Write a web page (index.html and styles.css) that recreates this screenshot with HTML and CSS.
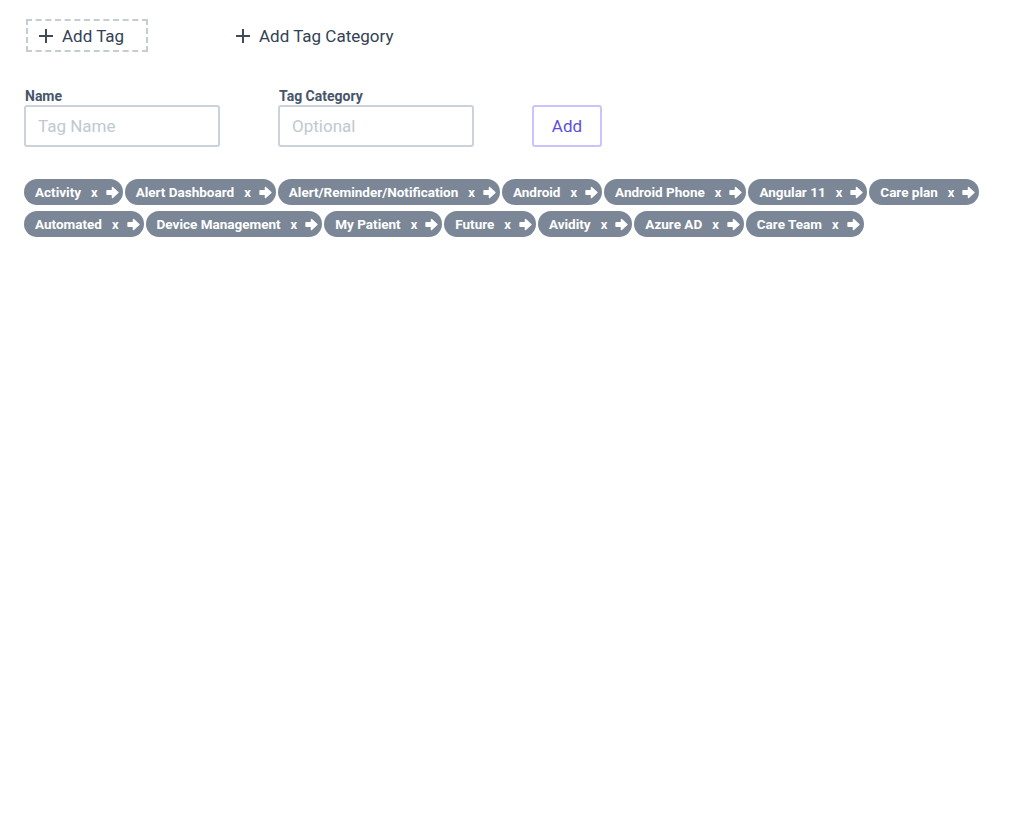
FILE: index.html
```html
<!DOCTYPE html>
<html>
<head>
<meta charset="utf-8">
<link rel="stylesheet" href="styles.css">
</head>
<body>
<div class="page">
  <div class="actions">
    <button class="add-tag">
      <svg class="plus" viewBox="0 0 16 16" width="16" height="16"><path d="M8 1v14M1 8h14" stroke="currentColor" stroke-width="2" fill="none"/></svg>
      <span>Add Tag</span>
    </button>
    <button class="add-cat">
      <svg class="plus" viewBox="0 0 16 16" width="16" height="16"><path d="M8 1v14M1 8h14" stroke="currentColor" stroke-width="2" fill="none"/></svg>
      <span>Add Tag Category</span>
    </button>
  </div>
  <div class="form">
    <div class="field">
      <label class="label">Name</label>
      <input class="input" placeholder="Tag Name">
    </div>
    <div class="field">
      <label class="label">Tag Category</label>
      <input class="input" placeholder="Optional">
    </div>
    <button class="add-btn">Add</button>
  </div>
  <div class="tags">
    <span class="tag">Activity<span class="x">x</span><svg class="arrow" viewBox="0 0 12 12"><path d="M1 4.5h5V1.5L11 6 6 10.5V7.5H1z" fill="currentColor" stroke="currentColor" stroke-width="1.4" stroke-linejoin="round"/></svg></span>
    <span class="tag">Alert Dashboard<span class="x">x</span><svg class="arrow" viewBox="0 0 12 12"><path d="M1 4.5h5V1.5L11 6 6 10.5V7.5H1z" fill="currentColor" stroke="currentColor" stroke-width="1.4" stroke-linejoin="round"/></svg></span>
    <span class="tag">Alert/Reminder/Notification<span class="x">x</span><svg class="arrow" viewBox="0 0 12 12"><path d="M1 4.5h5V1.5L11 6 6 10.5V7.5H1z" fill="currentColor" stroke="currentColor" stroke-width="1.4" stroke-linejoin="round"/></svg></span>
    <span class="tag">Android<span class="x">x</span><svg class="arrow" viewBox="0 0 12 12"><path d="M1 4.5h5V1.5L11 6 6 10.5V7.5H1z" fill="currentColor" stroke="currentColor" stroke-width="1.4" stroke-linejoin="round"/></svg></span>
    <span class="tag">Android Phone<span class="x">x</span><svg class="arrow" viewBox="0 0 12 12"><path d="M1 4.5h5V1.5L11 6 6 10.5V7.5H1z" fill="currentColor" stroke="currentColor" stroke-width="1.4" stroke-linejoin="round"/></svg></span>
    <span class="tag">Angular 11<span class="x">x</span><svg class="arrow" viewBox="0 0 12 12"><path d="M1 4.5h5V1.5L11 6 6 10.5V7.5H1z" fill="currentColor" stroke="currentColor" stroke-width="1.4" stroke-linejoin="round"/></svg></span>
    <span class="tag">Care plan<span class="x">x</span><svg class="arrow" viewBox="0 0 12 12"><path d="M1 4.5h5V1.5L11 6 6 10.5V7.5H1z" fill="currentColor" stroke="currentColor" stroke-width="1.4" stroke-linejoin="round"/></svg></span>
    <span class="tag">Automated<span class="x">x</span><svg class="arrow" viewBox="0 0 12 12"><path d="M1 4.5h5V1.5L11 6 6 10.5V7.5H1z" fill="currentColor" stroke="currentColor" stroke-width="1.4" stroke-linejoin="round"/></svg></span>
    <span class="tag">Device Management<span class="x">x</span><svg class="arrow" viewBox="0 0 12 12"><path d="M1 4.5h5V1.5L11 6 6 10.5V7.5H1z" fill="currentColor" stroke="currentColor" stroke-width="1.4" stroke-linejoin="round"/></svg></span>
    <span class="tag">My Patient<span class="x">x</span><svg class="arrow" viewBox="0 0 12 12"><path d="M1 4.5h5V1.5L11 6 6 10.5V7.5H1z" fill="currentColor" stroke="currentColor" stroke-width="1.4" stroke-linejoin="round"/></svg></span>
    <span class="tag">Future<span class="x">x</span><svg class="arrow" viewBox="0 0 12 12"><path d="M1 4.5h5V1.5L11 6 6 10.5V7.5H1z" fill="currentColor" stroke="currentColor" stroke-width="1.4" stroke-linejoin="round"/></svg></span>
    <span class="tag">Avidity<span class="x">x</span><svg class="arrow" viewBox="0 0 12 12"><path d="M1 4.5h5V1.5L11 6 6 10.5V7.5H1z" fill="currentColor" stroke="currentColor" stroke-width="1.4" stroke-linejoin="round"/></svg></span>
    <span class="tag">Azure AD<span class="x">x</span><svg class="arrow" viewBox="0 0 12 12"><path d="M1 4.5h5V1.5L11 6 6 10.5V7.5H1z" fill="currentColor" stroke="currentColor" stroke-width="1.4" stroke-linejoin="round"/></svg></span>
    <span class="tag">Care Team<span class="x">x</span><svg class="arrow" viewBox="0 0 12 12"><path d="M1 4.5h5V1.5L11 6 6 10.5V7.5H1z" fill="currentColor" stroke="currentColor" stroke-width="1.4" stroke-linejoin="round"/></svg></span>
  </div>
</div>
</body>
</html>
```
FILE: styles.css
```css
* { box-sizing: border-box; }
body {
  margin: 0;
  background: #fff;
  font-family: Roboto, "Noto Sans", sans-serif;
  color: #334155;
}
.page {
  padding: 19px 24px;
}
.actions {
  display: flex;
  align-items: center;
  gap: 87px;
  margin-left: 2px;
}
.actions button {
  font-family: inherit;
  font-size: 17px;
  color: #334155;
  background: none;
  display: flex;
  align-items: center;
  gap: 8px;
  cursor: pointer;
}
.add-tag {
  width: 122px;
  height: 33px;
  border: 2px dashed #c6ccd4;
  padding: 0 0 0 10px;
}
.add-cat {
  border: 0;
  padding: 0;
}
.plus { color: #3f4a5a; }
.form {
  display: flex;
  align-items: flex-end;
  margin-top: 35px;
}
.field {
  display: flex;
  flex-direction: column;
  width: 196px;
  margin-right: 58px;
}
.label {
  font-size: 14px;
  font-weight: 700;
  color: #475569;
  line-height: 17px;
  padding-top: 1px;
  padding-left: 1px;
}
.input {
  height: 42px;
  border: 2px solid #cbd2db;
  border-radius: 3px;
  padding: 0 12px;
  font-family: inherit;
  font-size: 17px;
  color: #334155;
  outline: none;
}
.input::placeholder { color: #c0c8d2; }
.add-btn {
  width: 70px;
  height: 42px;
  border: 2px solid #c9c4fb;
  border-radius: 3px;
  background: #fff;
  color: #5b4fe3;
  font-family: inherit;
  font-size: 17px;
  cursor: pointer;
}
.tags {
  display: flex;
  flex-wrap: wrap;
  gap: 6px 2px;
  margin-top: 32px;
  width: 975px;
}
.tag {
  display: inline-flex;
  align-items: center;
  height: 26px;
  padding: 0 4px 0 11px;
  border-radius: 13px;
  background: #7b8796;
  color: #fff;
  font-size: 13.5px;
  font-weight: 700;
}
.x {
  margin-left: 10px;
  font-size: 13px;
}
.arrow {
  width: 13px;
  height: 13px;
  margin-left: 8px;
}
```
